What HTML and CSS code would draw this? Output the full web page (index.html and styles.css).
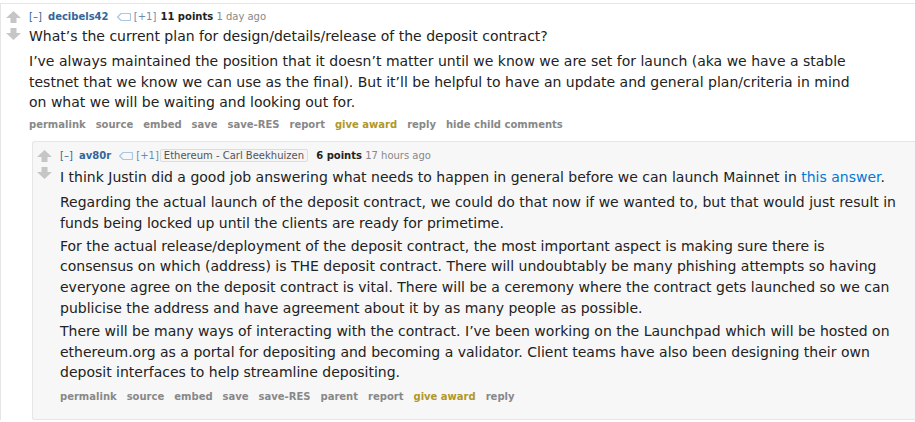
FILE: index.html
```html
<!doctype html>
<html lang="en">
<head>
	<meta charset="UTF-8">
	<title>comments</title>
	<link rel="stylesheet" href="styles.css">
</head>
<body>
	<div class="comment top">
		<div class="row">
			<div class="midcol">
				<svg class="arrow" viewBox="0 0 15 12" width="15" height="12"><polygon points="7.5,0 15,7 10.5,7 10.5,12 4.5,12 4.5,7 0,7"/></svg>
				<svg class="arrow" viewBox="0 0 15 12" width="15" height="12"><polygon points="7.5,12 15,5 10.5,5 10.5,0 4.5,0 4.5,5 0,5"/></svg>
			</div>
			<div class="entry">
				<p class="tagline">
					<a class="expand">[–]</a>
					<a class="author">decibels42</a>
					<svg class="tag" viewBox="0 0 14 8" width="14" height="8"><path d="M4 0.5 H12.5 A1 1 0 0 1 13.5 1.5 V6.5 A1 1 0 0 1 12.5 7.5 H4 L0.7 4 Z"/></svg><span class="vote">[+1]</span>
					<span class="score">11 points</span>
					<span class="time">1 day ago</span>
				</p>
				<div class="md">
					<p>What’s the current plan for design/details/release of the deposit contract?</p>
					<p>I’ve always maintained the position that it doesn’t matter until we know we are set for launch (aka we have a stable testnet that we know we can use as the final). But it’ll be helpful to have an update and general plan/criteria in mind on what we will be waiting and looking out for.</p>
				</div>
				<ul class="buttons">
					<li>permalink</li>
					<li>source</li>
					<li>embed</li>
					<li>save</li>
					<li>save-RES</li>
					<li>report</li>
					<li class="award">give award</li>
					<li>reply</li>
					<li>hide child comments</li>
				</ul>
			</div>
		</div>

		<div class="comment child">
			<div class="row">
				<div class="midcol">
					<svg class="arrow" viewBox="0 0 15 12" width="15" height="12"><polygon points="7.5,0 15,7 10.5,7 10.5,12 4.5,12 4.5,7 0,7"/></svg>
					<svg class="arrow" viewBox="0 0 15 12" width="15" height="12"><polygon points="7.5,12 15,5 10.5,5 10.5,0 4.5,0 4.5,5 0,5"/></svg>
				</div>
				<div class="entry">
					<p class="tagline">
						<a class="expand">[–]</a>
						<a class="author">av80r</a>
						<svg class="tag" viewBox="0 0 14 8" width="14" height="8"><path d="M4 0.5 H12.5 A1 1 0 0 1 13.5 1.5 V6.5 A1 1 0 0 1 12.5 7.5 H4 L0.7 4 Z"/></svg><span class="vote">[+1]</span><span class="flair">Ethereum - Carl Beekhuizen</span>
						<span class="score">6 points</span>
						<span class="time">17 hours ago</span>
					</p>
					<div class="md">
						<p>I think Justin did a good job answering what needs to happen in general before we can launch Mainnet in <a href="#">this answer</a>.</p>
						<p>Regarding the actual launch of the deposit contract, we could do that now if we wanted to, but that would just result in funds being locked up until the clients are ready for primetime.</p>
						<p>For the actual release/deployment of the deposit contract, the most important aspect is making sure there is consensus on which (address) is THE deposit contract. There will undoubtably be many phishing attempts so having everyone agree on the deposit contract is vital. There will be a ceremony where the contract gets launched so we can publicise the address and have agreement about it by as many people as possible.</p>
						<p>There will be many ways of interacting with the contract. I’ve been working on the Launchpad which will be hosted on ethereum.org as a portal for depositing and becoming a validator. Client teams have also been designing their own deposit interfaces to help streamline depositing.</p>
					</div>
					<ul class="buttons">
						<li>permalink</li>
						<li>source</li>
						<li>embed</li>
						<li>save</li>
						<li>save-RES</li>
						<li>parent</li>
						<li>report</li>
						<li class="award">give award</li>
						<li>reply</li>
					</ul>
				</div>
			</div>
		</div>
	</div>
</body>
</html>
```

FILE: styles.css
```css
body {
	margin: 0;
	padding: 0;
	background: #fff;
	font-family: "DejaVu Sans", Verdana, sans-serif;
	color: #222;
	overflow: hidden;
}
.comment {
	border: 1px solid #e6e6e6;
	border-right: none;
}
.top {
	margin-top: 3px;
	border-bottom: none;
	padding-top: 6px;
}
.row {
	display: flex;
}
.midcol {
	display: flex;
	flex-direction: column;
	gap: 5px;
	width: 15px;
	margin: 1px 8px 0 5px;
}
.arrow {
	fill: #c6c6c6;
}
.entry {
	flex: 1;
	min-width: 0;
}
.tagline {
	margin: 0 0 2px;
	font-size: 10px;
	line-height: 14px;
	color: #888;
	white-space: nowrap;
}
.expand {
	color: #369;
	margin-right: 3px;
}
.author {
	color: #369;
	font-weight: bold;
	margin-right: 5px;
}
.tag {
	fill: none;
	stroke: #a9c6e4;
	stroke-width: 1.2;
	vertical-align: -1px;
	margin-right: 3px;
}
.vote {
	color: #6a8db4;
	margin-right: 1px;
}
.flair {
	color: #545454;
	background: #f5f5f5;
	border: 1px solid #ddd;
	border-radius: 2px;
	padding: 0 3px;
	margin-right: 5px;
}
.score {
	color: #222;
	font-weight: bold;
}
.md {
	max-width: 840px;
	font-size: 14px;
	line-height: 20.8px;
}
.md p {
	margin: 0 0 2px;
}
.md p:first-child {
	margin-bottom: 4px;
}
.md a {
	color: #0079d3;
	text-decoration: none;
}
.buttons {
	list-style: none;
	margin: 5px 0 0;
	padding: 0;
	display: flex;
	gap: 10px;
	font-size: 10px;
	line-height: 14px;
	font-weight: bold;
	color: #888;
}
.buttons .award {
	color: #b09729;
}
.child {
	margin: 9px 0 0 31px;
	padding: 7px 0 15px;
	background: #f7f7f8;
	border-radius: 3px 0 0 3px;
}
.child .midcol {
	margin-left: 4px;
}
.child .tagline {
	margin-bottom: 4px;
}
.child .buttons {
	margin-top: 7px;
}
```
